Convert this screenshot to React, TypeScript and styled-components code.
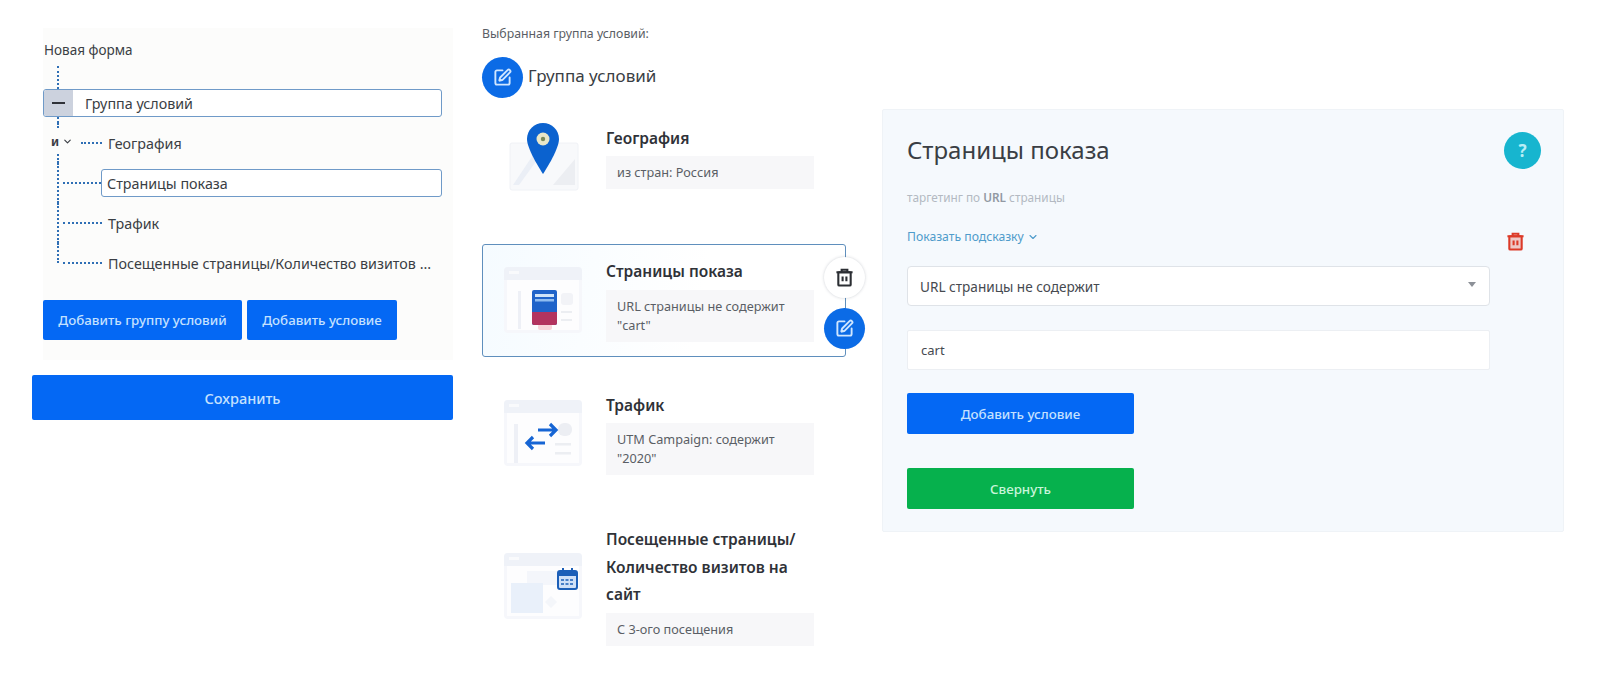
import React from 'react';
import styled, { createGlobalStyle } from 'styled-components';
import { ChevronDown, SquarePen } from 'lucide-react';

const GlobalStyle = createGlobalStyle`
  html, body {
    margin: 0;
    background: #ffffff;
  }
  body {
    font-family: "Noto Sans", "Open Sans", sans-serif;
    color: #3a3e44;
  }
  * {
    box-sizing: border-box;
  }
`;

const BLUE = '#0468f4';
const DOT_BLUE = '#2f6fb5';

const Page = styled.div`
  display: flex;
  align-items: flex-start;
  width: 1598px;
  height: 678px;
  padding-left: 32px;
  overflow: hidden;
`;

/* Left column: condition tree */

const TreeColumn = styled.div`
  width: 421px;
  padding-top: 28px;
`;

const TreePanel = styled.div`
  width: 410px;
  height: 332px;
  margin-left: 11px;
  padding-top: 12px;
  background: #fcfcfb;
`;

const RootLabel = styled.div`
  font-size: 13.5px;
  line-height: 20px;
  padding-left: 1px;
`;

const Spine = styled.div<{ $height: number; $top?: number }>`
  width: 0;
  height: ${p => p.$height}px;
  margin-left: 14px;
  margin-top: ${p => p.$top ?? 0}px;
  border-left: 2px dotted ${DOT_BLUE};
`;

const GroupBox = styled.div`
  display: flex;
  align-items: center;
  width: 399px;
  height: 28px;
  background: #ffffff;
  border: 1.5px solid #6f9ac8;
  border-radius: 3px;
  font-size: 14.3px;
  overflow: hidden;
`;

const Collapse = styled.div`
  display: flex;
  align-items: center;
  justify-content: center;
  width: 29px;
  height: 100%;
  margin-right: 12px;
  background: #ccd2de;
`;

const MinusBar = styled.span`
  width: 13px;
  height: 2.5px;
  background: #2f3238;
`;

const TreeRows = styled.div`
  margin-left: 14px;
`;

const TreeRow = styled.div`
  position: relative;
  display: flex;
  align-items: center;
  height: 40px;
  font-size: 14.3px;
`;

const Stem = styled.span<{ $last?: boolean }>`
  align-self: flex-start;
  width: 0;
  height: ${p => (p.$last ? 20 : 40)}px;
  border-left: 2px dotted ${DOT_BLUE};
`;

const Dots = styled.span<{ $short?: boolean; $boxed?: boolean }>`
  flex: none;
  width: ${p => (p.$short ? 21 : p.$boxed ? 38 : 39)}px;
  margin-left: ${p => (p.$short ? 22 : 4)}px;
  border-top: 2px dotted ${DOT_BLUE};
`;

const RowLabel = styled.span`
  margin-left: 6px;
  white-space: nowrap;
`;

const RowBox = styled.div`
  display: flex;
  align-items: center;
  width: 341px;
  height: 28px;
  padding-left: 5px;
  background: #ffffff;
  border: 1.5px solid #6f9ac8;
  border-radius: 3px;
`;

const AndBadge = styled.div`
  position: absolute;
  left: -11px;
  top: 6px;
  display: flex;
  align-items: center;
  gap: 3px;
  width: 32px;
  height: 24px;
  padding-left: 5px;
  background: #fcfcfb;
  font-size: 12px;
  font-weight: 700;
`;

const TreeButtons = styled.div`
  display: flex;
  gap: 5px;
  margin-top: 17px;
`;

const Button = styled.div<{ $width: number; $height?: number; $green?: boolean; $large?: boolean }>`
  display: flex;
  align-items: center;
  justify-content: center;
  flex: none;
  width: ${p => p.$width}px;
  height: ${p => p.$height ?? 40}px;
  background: ${p => (p.$green ? '#06b14d' : BLUE)};
  border-radius: 2px;
  color: ${p => (p.$green ? '#c8f5da' : '#c4e1ff')};
  font-size: ${p => (p.$large ? 14.5 : 13.3)}px;
  font-weight: 500;
`;

const SaveRow = styled.div`
  margin-top: 15px;
`;

/* Middle column: selected group */

const GroupColumn = styled.div`
  flex: none;
  width: 384px;
  margin-left: 29px;
  padding-top: 24px;
`;

const SelectedLabel = styled.div`
  font-size: 12.3px;
  line-height: 20px;
  color: #5a5e65;
`;

const GroupHeader = styled.div`
  display: flex;
  align-items: center;
  gap: 5px;
  margin-top: 13px;
`;

const GroupName = styled.span`
  padding-bottom: 4px;
  font-size: 17px;
`;

const RoundButton = styled.div<{ $white?: boolean }>`
  display: flex;
  align-items: center;
  justify-content: center;
  flex: none;
  width: 41px;
  height: 41px;
  border-radius: 50%;
  background: ${p => (p.$white ? '#ffffff' : '#0b6be6')};
  color: ${p => (p.$white ? '#2b2e33' : '#cfe6ff')};
  box-shadow: ${p => (p.$white ? '0 0 3px rgba(60, 70, 90, 0.25)' : 'none')};
`;

const Conditions = styled.div`
  display: flex;
  flex-direction: column;
  gap: 20px;
  width: 364px;
  margin-top: 11px;
`;

const Condition = styled.div<{ $selected?: boolean; $top?: number }>`
  position: relative;
  display: flex;
  align-items: center;
  gap: 23px;
  margin-top: ${p => p.$top ?? 0}px;
  padding: 13px 0 14px 20px;
  border: 1px solid ${p => (p.$selected ? '#5f8fbd' : 'transparent')};
  border-radius: 3px;
  background: ${p => (p.$selected ? 'linear-gradient(100deg, #f5fbff, #ffffff 60%)' : 'transparent')};
`;

const Illustration = styled.svg`
  flex: none;
  display: block;
  width: 80px;
  height: 68px;
`;

const ConditionBody = styled.div`
  width: 208px;
`;

const ConditionTitle = styled.div`
  margin-bottom: 4px;
  font-size: 15.5px;
  font-weight: 600;
  line-height: 27.5px;
  color: #2f3238;
`;

const ConditionText = styled.div`
  padding: 7px 11px;
  background: #f7f7f9;
  font-size: 12.7px;
  line-height: 19px;
  color: #5a5e65;
`;

const CardActions = styled.div`
  position: absolute;
  top: 12px;
  right: -20px;
  display: flex;
  flex-direction: column;
  gap: 10px;
`;

/* Right column: condition editor */

const EditorPanel = styled.div`
  flex: none;
  display: flex;
  width: 682px;
  height: 423px;
  margin-left: 16px;
  margin-top: 109px;
  background: #f5f9fd;
  border: 1px solid #eff3f7;
  border-radius: 2px;
`;

const EditorMain = styled.div`
  flex: none;
  width: 607px;
  padding: 25px 0 0 24px;
`;

const EditorTitle = styled.div`
  font-size: 24px;
  line-height: 30px;
  color: #3a3e44;
`;

const EditorSubtitle = styled.div`
  margin-top: 23px;
  font-size: 11.8px;
  line-height: 18px;
  color: #b3b9c2;

  b {
    font-weight: 600;
    color: #9299a3;
  }
`;

const HintLink = styled.div`
  display: flex;
  align-items: center;
  gap: 3px;
  margin-top: 22px;
  font-size: 12.2px;
  line-height: 18px;
  color: #4f9ccb;
`;

const SelectBox = styled.div`
  display: flex;
  align-items: center;
  justify-content: space-between;
  width: 583px;
  height: 40px;
  margin-top: 20px;
  padding: 0 13px 0 12px;
  background: #ffffff;
  border: 1px solid #dfe3e8;
  border-radius: 4px;
  font-size: 13.6px;
  color: #464a50;
`;

const Caret = styled.span`
  width: 0;
  height: 0;
  margin-bottom: 4px;
  border-left: 4px solid transparent;
  border-right: 4px solid transparent;
  border-top: 5px solid #8c9097;
`;

const TextInput = styled.div`
  display: flex;
  align-items: center;
  width: 583px;
  height: 40px;
  margin-top: 24px;
  padding-left: 13px;
  background: #ffffff;
  border: 1px solid #eceff3;
  border-radius: 2px;
  font-size: 13px;
  color: #464a50;
`;

const ActionRow = styled.div<{ $top: number }>`
  margin-top: ${p => p.$top}px;
`;

const EditorSide = styled.div`
  display: flex;
  flex-direction: column;
  align-items: flex-start;
  gap: 63px;
  padding: 22px 0 0 14px;
`;

const HelpBadge = styled.div`
  display: flex;
  align-items: center;
  justify-content: center;
  width: 37px;
  height: 37px;
  border-radius: 50%;
  background: #17b5cf;
  color: #b8eef6;
  font-size: 17px;
  font-weight: 700;
`;

const RedTrash = styled.div`
  display: flex;
  margin-left: 2px;
  color: #dc3a28;
`;

const TrashIcon: React.FC<{ size: number; fill?: string }> = ({ size, fill = 'none' }) => (
  <svg width={size} height={size} viewBox="0 0 20 20" fill="none" stroke="currentColor" strokeWidth="2.2">
    <path d="M7 4V1.8h6V4" />
    <path d="M1.5 4.5h17" />
    <rect x="3.5" y="4.5" width="13" height="14" rx="1" fill={fill} />
    <path d="M8 9v5M12 9v5" />
  </svg>
);

const MapIllustration = () => (
  <Illustration viewBox="0 0 80 68">
    <rect x="7" y="20" width="68" height="47" rx="2" fill="#f8f9fb" stroke="#f0f2f6" />
    <path d="M10 62 34 26h8L16 62z" fill="#ebeff6" />
    <path d="M50 62 72 36v26z" fill="#eceef2" />
    <path d="M40 0C31 0 24 7 24 16c0 11 16 35 16 35s16-24 16-35C56 7 49 0 40 0z" fill="#0b62cf" />
    <circle cx="40" cy="16" r="6.5" fill="#e9e7c8" />
    <circle cx="40" cy="16" r="2.2" fill="#7b8a5a" />
  </Illustration>
);

const WindowFrame: React.FC<{ children: React.ReactNode }> = ({ children }) => (
  <Illustration viewBox="0 0 80 68">
    <rect x="1" y="1" width="78" height="66" rx="4" fill="#f6f7fb" />
    <path d="M1 5a4 4 0 0 1 4-4h70a4 4 0 0 1 4 4v9H1z" fill="#eff2f8" />
    <rect x="4" y="14" width="72" height="50" fill="#fdfdfe" />
    <rect x="6" y="5" width="10" height="3" fill="#f9fafc" />
    {children}
  </Illustration>
);

const PagesIllustration = () => (
  <WindowFrame>
    <rect x="15" y="25" width="3" height="38" fill="#eef0f6" />
    <rect x="58" y="27" width="12" height="12" rx="3" fill="#f2f3f7" />
    <rect x="58" y="45" width="11" height="2" fill="#eceef2" />
    <rect x="58" y="53" width="11" height="2" fill="#eceef2" />
    <rect x="35" y="58" width="14" height="6" rx="2" fill="#f8d5da" />
    <rect x="29" y="24" width="25" height="35" rx="2" fill="#1f63c9" />
    <rect x="32" y="28" width="19" height="3" fill="#cfe3f8" />
    <rect x="32" y="33" width="19" height="2.5" fill="#8fbcf0" />
    <path d="M29 46h25v11a2 2 0 0 1-2 2H31a2 2 0 0 1-2-2z" fill="#b3345f" />
  </WindowFrame>
);

const TrafficIllustration = () => (
  <WindowFrame>
    <rect x="11" y="25" width="4" height="39" fill="#eef0f6" />
    <rect x="55" y="24" width="14" height="13" rx="6" fill="#eceef3" />
    <rect x="52" y="44" width="16" height="2.5" fill="#eceef2" />
    <rect x="52" y="53" width="16" height="2.5" fill="#eceef2" />
    <path d="M35 31h17M47 25l6 6-6 6" fill="none" stroke="#1665d4" strokeWidth="3.2" />
    <path d="M42 44H25M30 38l-6 6 6 6" fill="none" stroke="#1665d4" strokeWidth="3.2" />
  </WindowFrame>
);

const VisitsIllustration = () => (
  <WindowFrame>
    <rect x="24" y="19" width="32" height="14" fill="#f4f6fb" />
    <rect x="8" y="31" width="32" height="30" fill="#e9f0fa" />
    <path d="M48 44l6 6-6 6-6-6z" fill="#f4f6fa" />
    <rect x="55" y="19" width="19" height="18" rx="2" fill="#cfe0f7" stroke="#1c5fb8" strokeWidth="2" />
    <rect x="55" y="19" width="19" height="5" fill="#1c5fb8" />
    <path d="M60 16v5M69 16v5" stroke="#1c5fb8" strokeWidth="2" />
    <path d="M58 28h13M58 32h13" stroke="#1c5fb8" strokeWidth="1.5" strokeDasharray="3 1.5" />
  </WindowFrame>
);

const App: React.FC = () => (
  <Page>
    <GlobalStyle />

    <TreeColumn>
      <TreePanel>
        <RootLabel>Новая форма</RootLabel>
        <Spine $height={23} $top={6} />
        <GroupBox>
          <Collapse>
            <MinusBar />
          </Collapse>
          Группа условий
        </GroupBox>
        <Spine $height={6} />
        <TreeRows>
          <TreeRow>
            <Stem />
            <AndBadge>
              и <ChevronDown size={11} strokeWidth={2.5} />
            </AndBadge>
            <Dots $short />
            <RowLabel>География</RowLabel>
          </TreeRow>
          <TreeRow>
            <Stem />
            <Dots $boxed />
            <RowBox>Страницы показа</RowBox>
          </TreeRow>
          <TreeRow>
            <Stem />
            <Dots />
            <RowLabel>Трафик</RowLabel>
          </TreeRow>
          <TreeRow>
            <Stem $last />
            <Dots />
            <RowLabel>Посещенные страницы/Количество визитов ...</RowLabel>
          </TreeRow>
        </TreeRows>
        <TreeButtons>
          <Button $width={199}>Добавить группу условий</Button>
          <Button $width={150}>Добавить условие</Button>
        </TreeButtons>
      </TreePanel>
      <SaveRow>
        <Button $width={421} $height={45} $large>Сохранить</Button>
      </SaveRow>
    </TreeColumn>

    <GroupColumn>
      <SelectedLabel>Выбранная группа условий:</SelectedLabel>
      <GroupHeader>
        <RoundButton>
          <SquarePen size={19} strokeWidth={2.4} />
        </RoundButton>
        <GroupName>Группа условий</GroupName>
      </GroupHeader>
      <Conditions>
        <Condition>
          <MapIllustration />
          <ConditionBody>
            <ConditionTitle>География</ConditionTitle>
            <ConditionText>из стран: Россия</ConditionText>
          </ConditionBody>
        </Condition>
        <Condition $selected $top={18}>
          <PagesIllustration />
          <ConditionBody>
            <ConditionTitle>Страницы показа</ConditionTitle>
            <ConditionText>URL страницы не содержит "cart"</ConditionText>
          </ConditionBody>
          <CardActions>
            <RoundButton $white>
              <TrashIcon size={19} />
            </RoundButton>
            <RoundButton>
              <SquarePen size={19} strokeWidth={2.4} />
            </RoundButton>
          </CardActions>
        </Condition>
        <Condition $top={1}>
          <TrafficIllustration />
          <ConditionBody>
            <ConditionTitle>Трафик</ConditionTitle>
            <ConditionText>UTM Campaign: содержит "2020"</ConditionText>
          </ConditionBody>
        </Condition>
        <Condition $top={2}>
          <VisitsIllustration />
          <ConditionBody>
            <ConditionTitle>Посещенные страницы/ Количество визитов на сайт</ConditionTitle>
            <ConditionText>С 3-ого посещения</ConditionText>
          </ConditionBody>
        </Condition>
      </Conditions>
    </GroupColumn>

    <EditorPanel>
      <EditorMain>
        <EditorTitle>Страницы показа</EditorTitle>
        <EditorSubtitle>
          таргетинг по <b>URL</b> страницы
        </EditorSubtitle>
        <HintLink>
          Показать подсказку <ChevronDown size={12} strokeWidth={2.2} />
        </HintLink>
        <SelectBox>
          URL страницы не содержит
          <Caret />
        </SelectBox>
        <TextInput>cart</TextInput>
        <ActionRow $top={23}>
          <Button $width={227} $height={41}>Добавить условие</Button>
        </ActionRow>
        <ActionRow $top={34}>
          <Button $width={227} $height={41} $green>Свернуть</Button>
        </ActionRow>
      </EditorMain>
      <EditorSide>
        <HelpBadge>?</HelpBadge>
        <RedTrash>
          <TrashIcon size={19} fill="rgba(220, 58, 40, 0.25)" />
        </RedTrash>
      </EditorSide>
    </EditorPanel>
  </Page>
);

export default App;
